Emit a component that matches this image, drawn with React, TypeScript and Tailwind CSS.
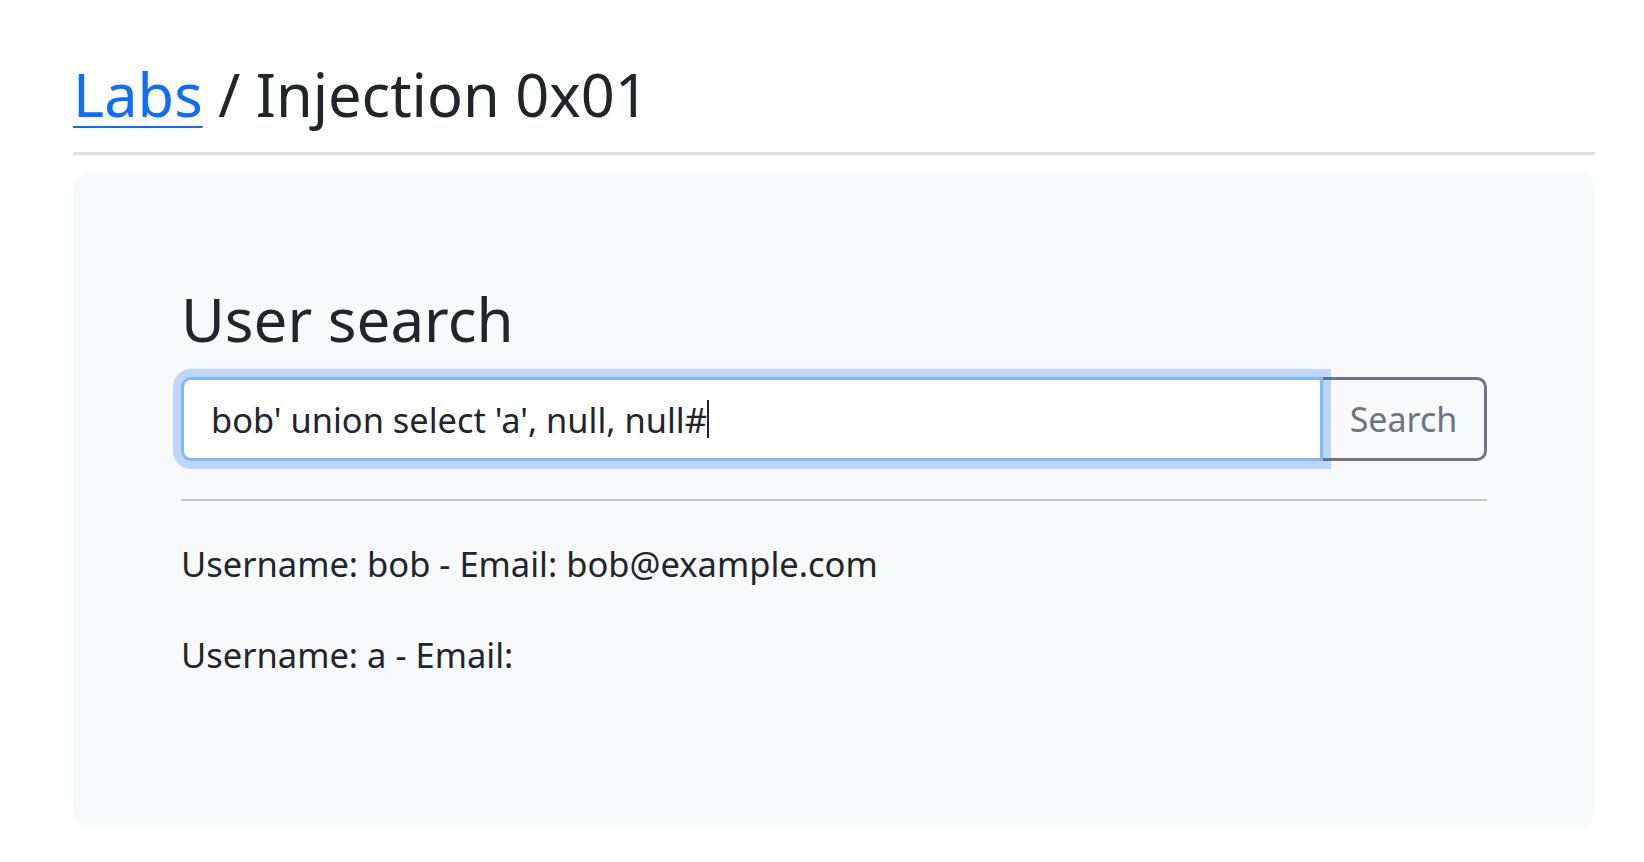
import React from 'react';

const query = "bob' union select 'a', null, null#";

const results = [
  { username: 'bob', email: 'bob@example.com' },
  { username: 'a', email: '' },
];

const App: React.FC = () => {
  return (
    <div className="min-h-screen bg-white text-[#212529]" style={{ fontFamily: '"Noto Sans", "Open Sans", sans-serif' }}>
      <div className="ml-[73px] w-[1522px] pt-[58px]">
        <h1 className="text-[59.5px] leading-[72px] font-normal pb-[22px] border-b-[3px] border-[#dee2e6]">
          <a href="#" className="text-[#0d6efd] underline decoration-[2px] underline-offset-[9px]">Labs</a> / Injection 0x01
        </h1>

        <div className="mt-[18px] h-[654px] rounded-[16px] bg-[#f8f9fa] px-[108px] pt-[110px]">
          <h2 className="text-[60px] leading-[72px] font-normal">User search</h2>

          <form className="mt-[22px] flex" onSubmit={e => e.preventDefault()}>
            <div className="relative z-10 flex h-[84px] flex-1 items-center rounded-l-[10px] border-[3px] border-[#86b7fe] bg-white pl-[27px] ring-[8px] ring-[#0d6efd]/25">
              <span className="text-[34.4px] leading-[51px] whitespace-pre">{query}</span>
              <span className="inline-block h-[38px] w-[2px] bg-[#212529]" />
            </div>
            <button
              type="submit"
              className="-ml-[3px] h-[84px] w-[167px] shrink-0 rounded-r-[10px] border-[3px] border-[#6c757d] bg-transparent text-[34px] leading-[51px] text-[#6c757d]"
            >
              Search
            </button>
          </form>

          <div className="mt-[38px] h-[2px] bg-[#c5c7c9]" />

          <div className="mt-[37px]">
            {results.map((r, i) => (
              <p key={i} className="mb-[38px] text-[34.5px] leading-[52.5px]">
                Username: {r.username} - Email: {r.email}
              </p>
            ))}
          </div>
        </div>
      </div>
    </div>
  );
};

export default App;
